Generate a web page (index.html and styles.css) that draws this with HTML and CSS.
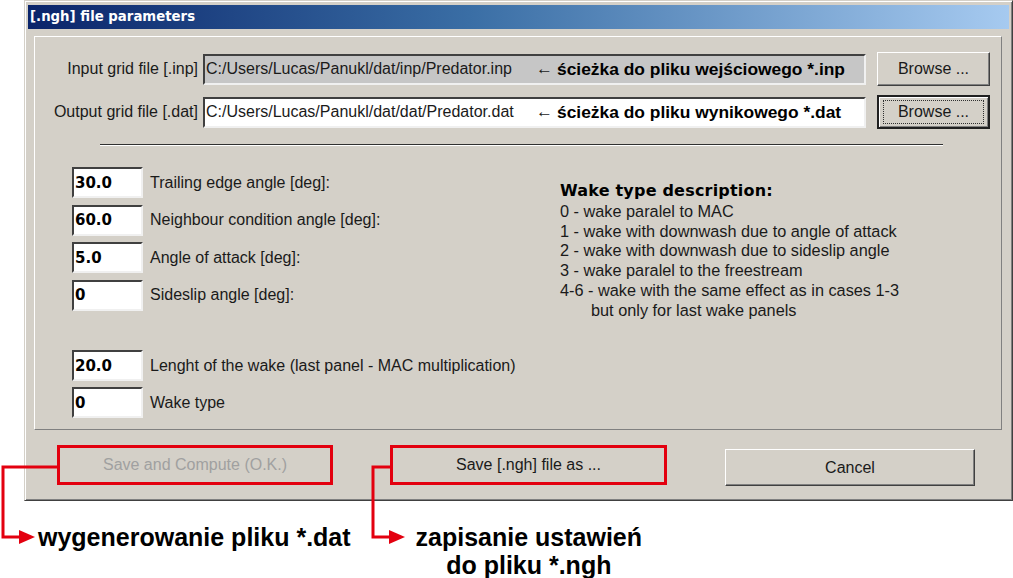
FILE: index.html
```html
<!DOCTYPE html>
<html lang="pl">
<head>
<meta charset="utf-8">
<title>[.ngh] file parameters</title>
<link rel="stylesheet" href="styles.css">
</head>
<body>
<div class="window">
  <div class="titlebar">[.ngh] file parameters</div>
  <div class="panel">
    <div class="file-row">
      <span class="file-label">Input grid file [.inp]</span>
      <div class="field field-ro"><span class="path">C:/Users/Lucas/Panukl/dat/inp/Predator.inp</span><span class="arr">&larr;</span><span class="note">ścieżka do pliku wejściowego *.inp</span></div>
      <div class="btn browse">Browse ...</div>
    </div>
    <div class="file-row row2">
      <span class="file-label">Output grid file [.dat]</span>
      <div class="field"><span class="path">C:/Users/Lucas/Panukl/dat/dat/Predator.dat</span><span class="arr">&larr;</span><span class="note">ścieżka do pliku wynikowego *.dat</span></div>
      <div class="btn browse default"><span class="focus">Browse ...</span></div>
    </div>
    <div class="separator"></div>
    <div class="upper">
      <div class="num-col">
        <div class="num-row"><span class="num">30.0</span><span class="num-label">Trailing edge angle [deg]:</span></div>
        <div class="num-row"><span class="num">60.0</span><span class="num-label">Neighbour condition angle [deg]:</span></div>
        <div class="num-row"><span class="num">5.0</span><span class="num-label">Angle of attack [deg]:</span></div>
        <div class="num-row"><span class="num">0</span><span class="num-label">Sideslip angle [deg]:</span></div>
      </div>
      <div class="desc">
        <div class="desc-title">Wake type description:</div>
        <div class="desc-line">0 - wake paralel to MAC</div>
        <div class="desc-line">1 - wake with downwash due to angle of attack</div>
        <div class="desc-line">2 - wake with downwash due to sideslip angle</div>
        <div class="desc-line">3 - wake paralel to the freestream</div>
        <div class="desc-line">4-6 - wake with the same effect as in cases 1-3</div>
        <div class="desc-line indent">but only for last wake panels</div>
      </div>
    </div>
    <div class="lower">
      <div class="num-row"><span class="num">20.0</span><span class="num-label">Lenght of the wake (last panel - MAC multiplication)</span></div>
      <div class="num-row"><span class="num">0</span><span class="num-label">Wake type</span></div>
    </div>
  </div>
  <div class="buttons">
    <div class="btn big marked compute">Save and Compute (O.K.)</div>
    <div class="btn big marked saveas">Save [.ngh] file as ...</div>
    <div class="btn big cancel">Cancel</div>
  </div>
</div>
<div class="notes">
  <div class="note-big first">wygenerowanie pliku *.dat</div>
  <div class="note-big second">zapisanie ustawień<br>do pliku *.ngh</div>
</div>
<svg class="connectors" width="1013" height="578" viewBox="0 0 1013 578">
  <polyline points="57,467 3,467 3,537 22,537" fill="none" stroke="#e3000f" stroke-width="3"/>
  <polygon points="19,530 35,537 19,544" fill="#e3000f"/>
  <polyline points="390,467 373,467 373,537 392,537" fill="none" stroke="#e3000f" stroke-width="3"/>
  <polygon points="389,530 405,537 389,544" fill="#e3000f"/>
</svg>
</body>
</html>
```

FILE: styles.css
```css
html, body {
  margin: 0;
  padding: 0;
}
body {
  position: relative;
  width: 1013px;
  height: 578px;
  overflow: hidden;
  background: #ffffff;
  font-family: "Liberation Sans", Arial, sans-serif;
  font-size: 16px;
  color: #1a1a1a;
}
.window {
  margin-left: 24px;
  width: 989px;
  height: 501px;
  box-sizing: border-box;
  background: #d4d0c8;
  border: 1px solid;
  border-color: #d4d0c8 #404040 #404040 #d4d0c8;
  box-shadow: inset 1px 1px #ffffff, inset -1px -1px #808080;
  padding: 4px 3px 3px 3px;
}
.titlebar {
  height: 24px;
  line-height: 24px;
  padding-left: 2px;
  background: linear-gradient(to right, #0a246a 0%, #3a6ea5 45%, #a6caf0 100%);
  color: #ffffff;
  font-family: "DejaVu Sans", Verdana, sans-serif;
  font-weight: bold;
  font-size: 13.3px;
}
.panel {
  margin: 7px 7px 0 6px;
  height: 394px;
  box-sizing: border-box;
  border: 1px solid;
  border-color: #ffffff #808080 #808080 #ffffff;
  padding-top: 15px;
}
.file-row {
  display: flex;
  align-items: center;
  height: 34px;
}
.row2 {
  margin-top: 9px;
}
.file-label {
  width: 163px;
  text-align: right;
  white-space: nowrap;
}
.field {
  margin-left: 5px;
  width: 663px;
  height: 31px;
  box-sizing: border-box;
  display: flex;
  align-items: center;
  padding-left: 1px;
  background: #ffffff;
  border: 2px solid;
  border-color: #404040 #f0f0f0 #f0f0f0 #404040;
  white-space: nowrap;
  overflow: hidden;
}
.field-ro {
  background: #c6c6c6;
}
.path {
  width: 330px;
  flex: none;
}
.arr {
  flex: none;
  font-size: 17px;
  margin-right: 4px;
}
.note {
  font-weight: bold;
  font-size: 17.4px;
  color: #000;
}
.btn {
  display: flex;
  align-items: center;
  justify-content: center;
  box-sizing: border-box;
  background: #d4d0c8;
  border: 1px solid;
  border-color: #ffffff #404040 #404040 #ffffff;
  box-shadow: inset -1px -1px #808080;
  white-space: nowrap;
}
.browse {
  margin-left: 11px;
  width: 113px;
  height: 34px;
}
.default {
  border: 2px solid;
  border-color: #202020;
  box-shadow: inset 1px 1px #ffffff, inset -1px -1px #808080;
}
.focus {
  display: flex;
  align-items: center;
  justify-content: center;
  width: 101px;
  height: 24px;
  box-sizing: border-box;
  border: 1px dotted #303030;
}
.separator {
  margin: 15px 0 0 65px;
  width: 843px;
  height: 0;
  border-top: 1px solid #303030;
  border-bottom: 1px solid #ffffff;
}
.upper {
  display: flex;
  margin-top: 21px;
}
.num-col {
  margin-left: 37px;
  width: 488px;
  display: flex;
  flex-direction: column;
  gap: 6.6px;
}
.num-row {
  display: flex;
  align-items: center;
  height: 31px;
}
.num {
  width: 71px;
  height: 31px;
  box-sizing: border-box;
  display: flex;
  align-items: center;
  padding-left: 1px;
  background: #ffffff;
  border: 2px solid;
  border-color: #404040 #f0f0f0 #f0f0f0 #404040;
  font-family: "DejaVu Sans", Verdana, sans-serif;
  font-weight: bold;
  font-size: 15px;
  color: #000;
}
.num-label {
  margin-left: 7px;
  white-space: nowrap;
}
.desc {
  margin-top: 14px;
}
.desc-title {
  font-family: "DejaVu Sans", Verdana, sans-serif;
  font-weight: bold;
  font-size: 16px;
  letter-spacing: 0.2px;
  line-height: 20px;
  color: #000;
  margin-bottom: 1px;
}
.desc-line {
  line-height: 19.7px;
  font-size: 16.3px;
  white-space: nowrap;
}
.indent {
  padding-left: 31px;
}
.lower {
  margin-top: 30px;
  margin-left: 37px;
  display: flex;
  flex-direction: column;
  gap: 6px;
}
.buttons {
  display: flex;
  align-items: flex-start;
  margin-top: 15px;
  margin-left: 29px;
}
.big {
  height: 40px;
}
.marked {
  border: 3px solid #e3000f;
  box-shadow: none;
}
.compute {
  width: 276px;
  color: #a0a0a0;
}
.saveas {
  width: 277px;
  margin-left: 57px;
}
.cancel {
  width: 250px;
  height: 37px;
  margin-top: 4px;
  margin-left: 58px;
}
.notes {
  display: flex;
  align-items: flex-start;
  margin-top: 22px;
  font-weight: bold;
  font-size: 25px;
  line-height: 28px;
  color: #000;
}
.first {
  margin-left: 38px;
}
.second {
  margin-left: 65px;
  text-align: center;
}
.connectors {
  position: absolute;
  left: 0;
  top: 0;
  pointer-events: none;
}
```
